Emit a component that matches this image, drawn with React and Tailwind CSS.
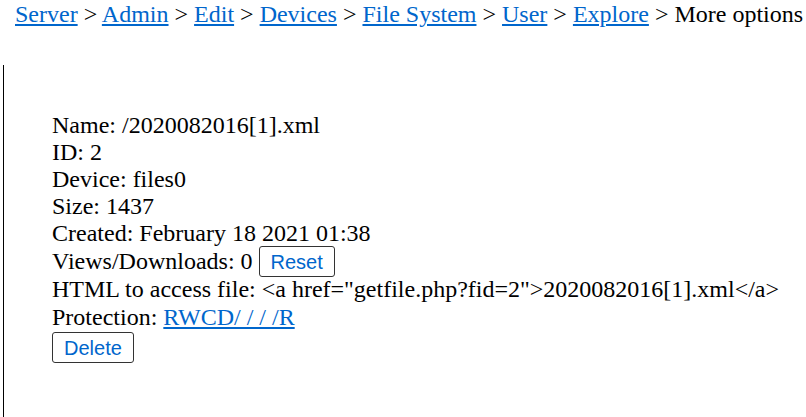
import React from 'react';

const crumbs = ['Server', 'Admin', 'Edit', 'Devices', 'File System', 'User', 'Explore'];

function Btn({ children }) {
  return (
    <button className="h-[31px] px-[11px] border border-[#333] rounded-[3px] bg-white text-[#0066cc] font-['Liberation_Sans',sans-serif] text-[20px] leading-none align-middle">
      {children}
    </button>
  );
}

export default function App() {
  return (
    <div className="w-[806px] h-[417px] overflow-hidden bg-white text-black font-['Liberation_Serif',serif] text-[24px] leading-[27px]">
      {/* Breadcrumb */}
      <div className="pl-[15px] pt-[1px] whitespace-nowrap">
        {crumbs.map((c) => (
          <React.Fragment key={c}>
            <a href="#" className="text-[#0066cc] underline">{c}</a>
            {' > '}
          </React.Fragment>
        ))}
        More options
      </div>

      {/* File details */}
      <div className="mt-[37px] ml-[3px] border-l border-black h-[400px] pl-[48px] pt-[47px]">
        <div>Name: /2020082016[1].xml</div>
        <div>ID: 2</div>
        <div>Device: files0</div>
        <div>Size: 1437</div>
        <div>Created: February 18 2021 01:38</div>
        <div className="h-[29px] flex items-center">
          <span>Views/Downloads: 0&nbsp;</span>
          <Btn>Reset</Btn>
        </div>
        <div className="h-[28px]">HTML to access file: &lt;a href="getfile.php?fid=2"&gt;2020082016[1].xml&lt;/a&gt;</div>
        <div>
          Protection: <a href="#" className="text-[#0066cc] underline">RWCD/ / / /R</a>
        </div>
        <div className="mt-[1px]">
          <Btn>Delete</Btn>
        </div>
      </div>
    </div>
  );
}
